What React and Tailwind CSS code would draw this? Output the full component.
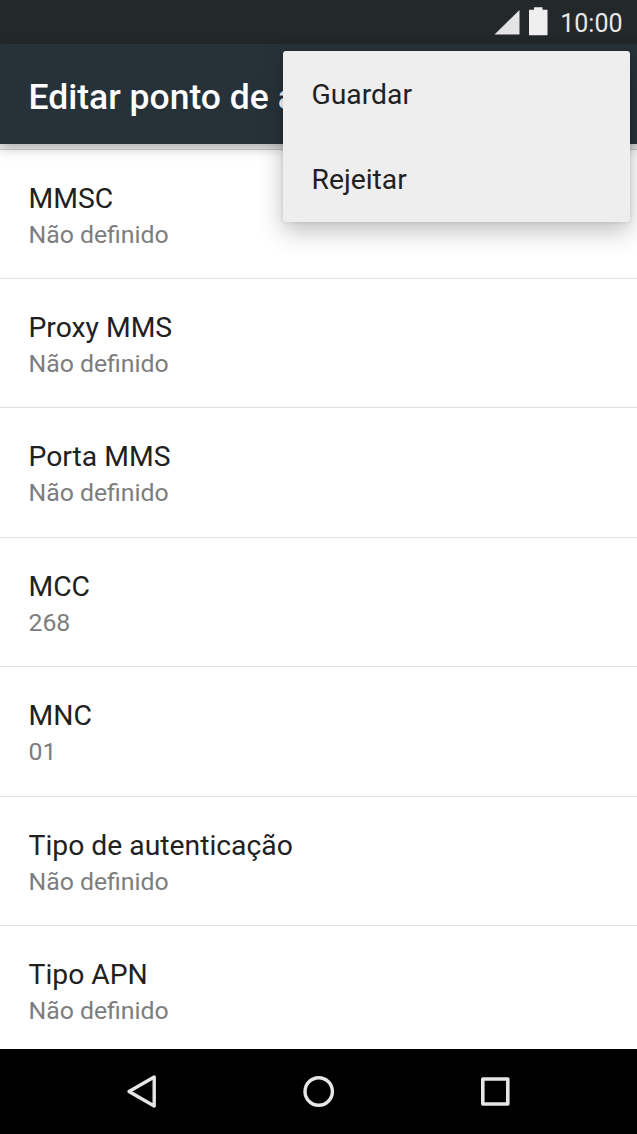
const settings = [
  { title: "MMSC", value: "Não definido" },
  { title: "Proxy MMS", value: "Não definido" },
  { title: "Porta MMS", value: "Não definido" },
  { title: "MCC", value: "268" },
  { title: "MNC", value: "01" },
  { title: "Tipo de autenticação", value: "Não definido" },
  { title: "Tipo APN", value: "Não definido" },
]

export default function App() {
  return (
    <div className="relative flex h-[1134px] w-[637px] flex-col overflow-hidden bg-white font-['Roboto',sans-serif]">

      {/* Status bar */}
      <div className="flex h-11 shrink-0 items-center justify-end bg-[#23282b] pr-[14.5px] text-[#e8e8e8]">
        <svg width="55" height="44" viewBox="0 0 55 44" fill="currentColor">
          <path d="M25.5 10v24.5H.5z" fill="#e4e4e4" />
          <path d="M40 7.3h8.5v2.5h5v25.4H35V9.8h5z" fill="#efefef" />
        </svg>
        <span className="ml-[11px] mt-[3px] text-[25px] leading-none">10:00</span>
      </div>

      {/* Title bar */}
      <div className="z-10 flex h-[99.5px] shrink-0 items-center bg-[#273238] pl-[28.5px] shadow-[0_4px_12px_rgba(0,0,0,0.25)]">
        <h1 className="mt-[6px] whitespace-nowrap text-[35.5px] font-medium leading-[42px] text-white">
          Editar ponto de a
        </h1>
      </div>

      {/* Settings list */}
      <div className="min-h-0 flex-1 overflow-hidden">
        <div className="h-[6.1px] border-b border-[#d0d0d0] bg-[#ececec]" />
        {settings.map((item) => (
          <SettingRow key={item.title} title={item.title} value={item.value} />
        ))}
      </div>

      {/* Navigation bar */}
      <div className="z-10 flex h-[85px] shrink-0 items-center justify-center gap-[137px] bg-black text-[#e6e6e6]">
        <svg width="40" height="40" viewBox="0 0 40 40" fill="none" stroke="currentColor" strokeWidth="3.4" strokeLinejoin="round">
          <path d="M32.2 5v29L7 19.500z" />
        </svg>
        <svg width="40" height="40" viewBox="0 0 40 40" fill="none" stroke="currentColor" strokeWidth="3.4">
          <circle cx="19.7" cy="19.5" r="13.7" />
        </svg>
        <svg width="40" height="40" viewBox="0 0 40 40" fill="none" stroke="currentColor" strokeWidth="3.6" strokeLinejoin="round">
          <rect x="6.8" y="7" width="25" height="25" />
        </svg>
      </div>

      {/* Overflow menu */}
      <div className="absolute left-[283px] top-[51px] z-20 h-[170.5px] w-[347px] rounded-[3px] bg-[#eeeeee] shadow-[0_9px_24px_rgba(0,0,0,0.25),0_0_4px_rgba(0,0,0,0.12)]">
        <MenuItem label="Guardar" />
        <MenuItem label="Rejeitar" />
      </div>
    </div>
  )
}

function SettingRow({ title, value }) {
  return (
    <div className="h-[129.4px] border-b border-[#e1e1e1] px-[28.5px] pt-[31px]">
      <p className="text-[28.3px] leading-[36px] text-[#212121]">{title}</p>
      <p className="text-[24.8px] leading-[35px] text-[#7d7d7d]">{value}</p>
    </div>
  )
}

function MenuItem({ label }) {
  return (
    <div className="flex h-[85px] items-center px-[28.5px] pt-[3px] text-[28.3px] leading-none text-[#212121]">
      {label}
    </div>
  )
}
